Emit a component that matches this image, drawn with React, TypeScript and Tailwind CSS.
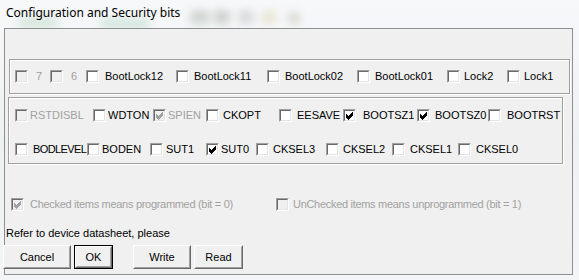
import React from "react";

const F = { fontFamily: '"Liberation Sans", Arial, sans-serif' };

function Box({ checked = false, disabled = false }: { checked?: boolean; disabled?: boolean }) {
  return (
    <div className="w-[13px] h-[13px] shrink-0 border border-t-[#a0a0a0] border-l-[#a0a0a0] border-b-white border-r-white">
      <div
        className={`w-[11px] h-[11px] border border-t-[#696969] border-l-[#696969] border-b-[#e3e3e3] border-r-[#e3e3e3] flex items-center justify-center ${
          disabled ? "bg-[#f0f0f0]" : "bg-white"
        }`}
      >
        {checked && (
          <svg width="9" height="9" viewBox="0 0 9 9">
            <path
              d="M1 3.5 L3.5 6 L8 1.5 M1 4.5 L3.5 7 L8 2.5 M1 5.5 L3.5 8 L8 3.5"
              stroke={disabled ? "#a0a0a0" : "#000"}
              strokeWidth="1"
              fill="none"
              shapeRendering="crispEdges"
            />
          </svg>
        )}
      </div>
    </div>
  );
}

type Item = {
  label: string;
  box: number;
  lab: number;
  next: number;
  checked?: boolean;
  disabled?: boolean;
  ls?: number;
};

function Check({ label, box, lab, next, checked, disabled, ls }: Item) {
  return (
    <div className="flex items-center shrink-0" style={{ width: next - box }}>
      <Box checked={checked} disabled={disabled} />
      <span
        className={`text-[11px] leading-none whitespace-nowrap ${disabled ? "text-[#a0a0a0]" : "text-black"}`}
        style={{ marginLeft: lab - box - 13, letterSpacing: ls ?? 0 }}
      >
        {label}
      </span>
    </div>
  );
}

function mk(
  labels: string[],
  boxes: number[],
  labs: number[],
  end: number,
  extra: Record<string, Partial<Item>> = {}
): Item[] {
  return labels.map((l, i) => ({
    label: l,
    box: boxes[i],
    lab: labs[i],
    next: i + 1 < boxes.length ? boxes[i + 1] : end,
    ...(extra[l] || {}),
  }));
}

const row1 = mk(
  ["7", "6", "BootLock12", "BootLock11", "BootLock02", "BootLock01", "Lock2", "Lock1"],
  [15, 50, 86, 176, 267, 357, 447, 507],
  [36, 71, 105, 194, 285, 375, 464, 524],
  560,
  { "7": { disabled: true }, "6": { disabled: true } }
);

const row2 = mk(
  ["RSTDISBL", "WDTON", "SPIEN", "CKOPT", "EESAVE", "BOOTSZ1", "BOOTSZ0", "BOOTRST"],
  [15, 93, 153, 206, 279, 343, 417, 488],
  [30, 108, 168, 223, 297, 363, 435, 507],
  558,
  {
    RSTDISBL: { disabled: true },
    SPIEN: { disabled: true, checked: true },
    BOOTSZ1: { checked: true },
    BOOTSZ0: { checked: true },
  }
);

const row3 = mk(
  ["BODLEVEL", "BODEN", "SUT1", "SUT0", "CKSEL3", "CKSEL2", "CKSEL1", "CKSEL0"],
  [15, 87, 150, 206, 256, 326, 392, 458],
  [33, 102, 166, 221, 273, 343, 410, 476],
  558,
  { BODLEVEL: { ls: -0.6 }, SUT0: { checked: true } }
);

function Button({ label, w, def = false }: { label: string; w: number; def?: boolean }) {
  return (
    <div className={`h-[24px] shrink-0 ${def ? "border border-black" : ""}`} style={{ width: w }}>
      <div className="h-full border border-t-white border-l-white border-b-[#696969] border-r-[#696969]">
        <div className="h-full border border-transparent border-b-[#a0a0a0] border-r-[#a0a0a0] bg-[#f0f0f0] flex items-center justify-center text-[11px] text-black">
          {label}
        </div>
      </div>
    </div>
  );
}

export default function App() {
  return (
    <div
      className="w-[579px] h-[280px] relative overflow-hidden bg-gradient-to-b from-[#f7f8fa] via-[#eef1f4] to-[#f3f5f7]"
      style={F}
    >
      {/* blurred glass background showing through the frame */}
      <div className="absolute left-[18px] top-[18px] w-[40px] h-[9px] rounded-full bg-[#a9cfb2] blur-[5px] opacity-50" />
      <div className="absolute left-[100px] top-[19px] w-[50px] h-[9px] rounded-full bg-[#a5d0bd] blur-[5px] opacity-50" />
      <div className="absolute left-[190px] top-[10px] w-[20px] h-[14px] rounded bg-[#9aa698] blur-[4px] opacity-40" />
      <div className="absolute left-[214px] top-[10px] w-[16px] h-[14px] rounded bg-[#8f9a8d] blur-[4px] opacity-40" />
      <div className="absolute left-[238px] top-[10px] w-[16px] h-[14px] rounded bg-[#b0b2af] blur-[4px] opacity-40" />
      <div className="absolute left-[262px] top-[11px] w-[14px] h-[13px] rounded bg-[#cfca95] blur-[4px] opacity-40" />
      <div className="absolute left-[288px] top-[12px] w-[12px] h-[12px] rounded bg-[#a3a385] blur-[4px] opacity-35" />

      <div className="relative h-[28px] flex items-center pl-[6px] pb-[2px]">
        <span className="text-[12px] text-black" style={{ fontFamily: '"Noto Sans", "Open Sans", sans-serif' }}>
          Configuration and Security bits
        </span>
      </div>

      <div className="relative flex">
        <div className="w-[4px] shrink-0" />
        <div className="w-[569px] h-[247px] border border-[#8e8f8f] bg-[#f0f0f0] flex flex-col">
          {/* lock bits group */}
          <div className="mt-[30px] ml-[4px] w-[561px] h-[35px] border border-[#a0a0a0] shadow-[inset_1px_1px_0_#fff,1px_1px_0_#fff] flex items-center pl-[5px]">
            {row1.map((it) => (
              <Check key={it.label} {...it} />
            ))}
          </div>
          {/* fuse bits group */}
          <div className="mt-[3px] ml-[3px] w-[555px] h-[67px] border border-[#a0a0a0] shadow-[inset_1px_1px_0_#fff,1px_1px_0_#fff] flex flex-col pl-[6px] pt-[11px] gap-[21px]">
            <div className="flex items-center h-[13px]">
              {row2.map((it) => (
                <Check key={it.label} {...it} />
              ))}
            </div>
            <div className="flex items-center h-[13px]">
              {row3.map((it) => (
                <Check key={it.label} {...it} />
              ))}
            </div>
          </div>
          {/* legend */}
          <div className="mt-[34px] ml-[6px] flex items-center h-[13px]">
            <Check label="Checked items means programmed (bit = 0)" box={11} lab={30} next={276} checked disabled ls={-0.3} />
            <Check label="UnChecked items means unprogrammed (bit = 1)" box={276} lab={293} next={540} disabled ls={-0.3} />
          </div>
          <div className="mt-[17px] ml-[1px] text-[11px] text-black leading-none">Refer to device datasheet, please</div>
          <div className="mt-[6px] ml-[-2px] flex">
            <Button label="Cancel" w={68} />
            <div className="w-[3px]" />
            <Button label="OK" w={39} def />
            <div className="w-[20px]" />
            <Button label="Write" w={58} />
            <div className="w-[3px]" />
            <Button label="Read" w={49} />
          </div>
        </div>
      </div>
    </div>
  );
}
